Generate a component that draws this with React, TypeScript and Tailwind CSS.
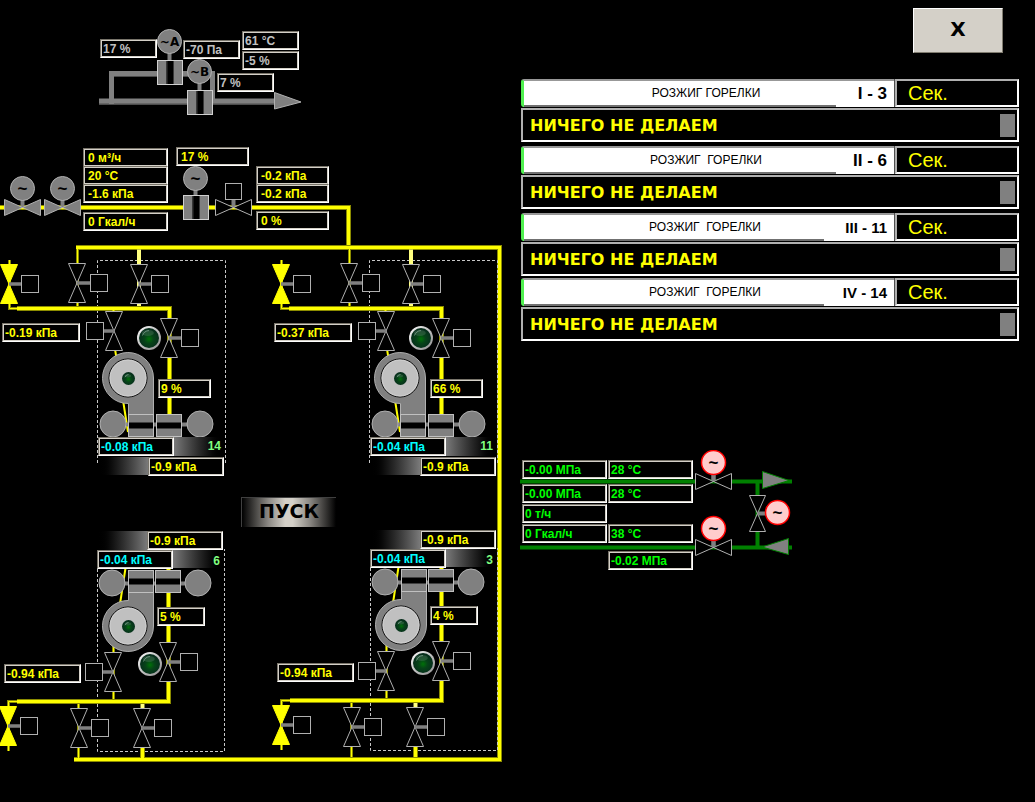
import type { ReactNode } from "react";

const METAL = "#808080";
const EDGE = "#b0b0b0";
const GAS = "#ffff00";
const GAS_DARK = "#8c8c00";
const GAS_PALE = "#ffff80";
const WATER = "#008000";

/* ---------- HTML parts ---------- */

function Reading({ className, children }: { className: string; children: ReactNode }) {
  return (
    <div
      className={`flex h-[19px] items-center whitespace-nowrap border border-b-white border-l-[#78746a] border-r-white border-t-[#78746a] bg-black text-xs font-bold leading-none shadow-[inset_0_0_0_1px_#d4d0c8] ${className}`}
    >
      {children}
    </div>
  );
}

/* ---------- drawing symbols ---------- */

type Point = { x: number; y: number };

function Pipe({ d, wide = true, color = GAS, edge = GAS_DARK }: { d: string; wide?: boolean; color?: string; edge?: string }) {
  return (
    <g fill="none" strokeLinejoin="miter">
      <path d={d} stroke={edge} strokeWidth={wide ? 5 : 3} />
      <path d={d} stroke={color} strokeWidth={wide ? 3 : 1} />
    </g>
  );
}

function VerticalValve({ x, y, open = false, box = 12.5, left = false }: Point & { open?: boolean; box?: number; left?: boolean }) {
  const boxX = left ? x - 27.5 : x + box;
  return (
    <g>
      <path
        d={`M${x - 8.5} ${y - 19.5}H${x + 8.5}L${x - 8.5} ${y + 19.5}H${x + 8.5}Z`}
        fill={open ? GAS : "#000"}
        stroke={open ? GAS : EDGE}
      />
      <path d={`M${x} ${y}H${left ? x - 11 : x + box}`} stroke={METAL} strokeWidth="3.5" />
      <rect x={boxX} y={y - 8.5} width="17" height="17" fill="#000" stroke={EDGE} />
    </g>
  );
}

function HorizontalValve({ x, y, fill = "#000" }: Point & { fill?: string }) {
  return (
    <g>
      <path d={`M${x} ${y}V${y - 9}`} stroke={METAL} strokeWidth="4" />
      <path d={`M${x - 18} ${y - 8}V${y + 8}L${x + 18} ${y - 8}V${y + 8}Z`} fill={fill} stroke={EDGE} />
    </g>
  );
}

function Drive({ x, y, label = "~", alarm = false }: Point & { label?: string; alarm?: boolean }) {
  const short = label === "~";
  return (
    <g>
      <circle cx={x} cy={y} r="12" fill={alarm ? "#ffcccc" : METAL} stroke={alarm ? "#ff0000" : EDGE} strokeWidth={alarm ? 1.5 : 1} />
      <text
        x={x}
        y={short ? y + 5 : y + 4.5}
        textAnchor="middle"
        fontSize={short ? 17 : 12}
        fontFamily={short ? "Liberation Sans, sans-serif" : "DejaVu Sans, sans-serif"}
        fontWeight="700"
        fill="#000"
      >
        {label}
      </text>
    </g>
  );
}

function Damper({ x, y, vertical = false }: Point & { vertical?: boolean }) {
  return vertical ? (
    <g>
      <rect x={x} y={y} width="25" height="24" fill={METAL} stroke="#d0d0d0" />
      <rect x={x + 8.5} y={y + 0.5} width="8" height="23" fill="#383838" />
      <rect x={x + 10} y={y + 0.5} width="5.5" height="23" fill="#000" />
    </g>
  ) : (
    <g>
      <rect x={x} y={y} width="25" height="22" fill={METAL} stroke="#c0c0c0" />
      <rect x={x + 0.5} y={y + 7.5} width="24" height="7" fill="#404040" />
      <rect x={x + 0.5} y={y + 8.5} width="24" height="5" fill="#000" />
    </g>
  );
}

function Lamp({ x, y, r }: Point & { r: number }) {
  const big = r > 8;
  return (
    <g>
      {big && <circle cx={x} cy={y} r={r} fill="url(#lamp-rim)" />}
      <circle cx={x} cy={y} r={big ? r - 2 : r} fill="url(#lamp-glass)" />
      <ellipse cx={x - r * 0.1} cy={y - r * 0.42} rx={r * 0.5} ry={r * 0.25} fill="#b8d8c4" opacity="0.16" />
      <path
        d={`M${x - r * 0.55} ${y - r * 0.2}Q${x - r * 0.4} ${y - r * 0.6} ${x} ${y - r * 0.62}`}
        fill="none"
        stroke="#9cbcaa"
        strokeWidth="0.8"
        opacity="0.7"
      />
    </g>
  );
}

function Fan({ x, y, up = false }: Point & { up?: boolean }) {
  const k = up ? -1 : 1;
  const sweep = up ? 0 : 1;
  return (
    <g>
      <path
        d={`M${x + 0.5} ${y + 36.5 * k}V${y + 25.5 * k}A25.5 25.5 0 1 ${sweep} ${x + 25.5} ${y}V${y + 36.5 * k}Z`}
        fill={METAL}
        stroke={EDGE}
      />
      <circle cx={x} cy={y} r="19" fill="#c0c0c0" stroke="#000" />
      <circle cx={x} cy={y} r="18" fill="none" stroke="#d0d0d0" />
      <Lamp x={x + 0.5} y={y + 0.5} r={6.5} />
    </g>
  );
}

function LampGradients() {
  return (
    <defs>
      <radialGradient id="lamp-glass" cx="0.5" cy="0.55" r="0.55">
        <stop offset="0" stopColor="#007208" />
        <stop offset="0.4" stopColor="#064418" />
        <stop offset="1" stopColor="#062a1c" />
      </radialGradient>
      <linearGradient id="lamp-rim" x1="0" y1="0" x2="1" y2="1">
        <stop offset="0" stopColor="#ffffff" />
        <stop offset="0.5" stopColor="#c0c0c0" />
        <stop offset="1" stopColor="#909090" />
      </linearGradient>
    </defs>
  );
}

/* ---------- burners ---------- */

type BurnerProps = {
  className: string;
  number: string;
  gas: string;
  damper: string;
  air: string;
  furnace: string;
};

function UpperBurner({ className, number, gas, damper, air, furnace }: BurnerProps) {
  return (
    <section className={`absolute h-[240px] w-[228px] ${className}`}>
      <svg className="absolute inset-0 overflow-visible" width="228" height="240" viewBox="0 240 228 240">
        <path d="M97.5 463V260.5H225.5V463" fill="none" stroke="#c8c8c8" strokeDasharray="3 2" />
        <Pipe wide={false} d="M9.5 260V308.5H20" />
        <Pipe wide={false} d="M77.5 249V307" />
        <path d="M139 249.5V307" stroke={GAS_PALE} strokeWidth="4" />
        <Pipe d="M17 308.5H169.5V424" />
        <path d="M113.5 307V312M115 349L128 432" stroke={GAS} strokeWidth="2" />
        <VerticalValve x={9} y={284} open />
        <VerticalValve x={77} y={283} box={13.5} />
        <VerticalValve x={139} y={284} />
        <VerticalValve x={114} y={331} left />
        <VerticalValve x={169} y={338} />
        <Lamp x={149} y={338} r={12} />
        <path d="M120 424.5H195" stroke={METAL} strokeWidth="4" />
        <Fan x={128} y={378} />
        <Damper x={128.5} y={414.5} />
        <Damper x={156.5} y={414.5} />
        <circle cx="113" cy="424" r="13" fill={METAL} stroke={EDGE} />
        <circle cx="200" cy="424" r="13" fill={METAL} stroke={EDGE} />
      </svg>
      <Reading className="absolute left-[2px] top-[83px] w-[78px] pl-0.5 text-[#ffff00]">{gas}</Reading>
      <Reading className="absolute left-[158px] top-[139px] w-[53px] pl-0.5 text-[#ffff00]">{damper}</Reading>
      <div className="absolute left-[98px] top-[197px] w-[126px]">
        <div className="flex h-5 items-start">
          <Reading className="w-[76px] pl-0.5 text-[#00ffff]">{air}</Reading>
          <div className="h-[19px] flex-1 bg-linear-to-r from-[#7a7a7a] to-black pr-[3px] text-right text-xs font-bold leading-[18px] text-[#80ff80]">
            {number}
          </div>
        </div>
        <div className="flex">
          <div className="h-[18px] flex-1 bg-linear-to-r from-black to-[#7a7a7a]" />
          <Reading className="w-[76px] pl-0.5 text-[#ffff00]">{furnace}</Reading>
        </div>
      </div>
    </section>
  );
}

function LowerBurner({ className, number, gas, damper, air, furnace }: BurnerProps) {
  return (
    <section className={`absolute h-[232px] w-[228px] ${className}`}>
      <svg className="absolute inset-0 overflow-visible" width="228" height="232" viewBox="0 528 228 232">
        <path d="M97.5 549V751.5H224.5V549" fill="none" stroke="#c8c8c8" strokeDasharray="3 2" />
        <Pipe wide={false} d="M8.5 751V701.5H20" />
        <Pipe wide={false} d="M78.5 703V758" />
        <Pipe wide={false} d="M113.5 640V701" />
        <path d="M142.5 703V712" stroke={GAS_PALE} strokeWidth="4" />
        <Pipe d="M142.5 740V758" />
        <Pipe d="M17 701.5H168.5V568" />
        <path d="M125.5 568L120 604" stroke={GAS} strokeWidth="2" />
        <VerticalValve x={8} y={726} open />
        <VerticalValve x={79} y={728} />
        <VerticalValve x={142} y={728} />
        <VerticalValve x={113} y={672} left />
        <VerticalValve x={168} y={662} />
        <Lamp x={150} y={664} r={12} />
        <path d="M120 583.5H190" stroke={METAL} strokeWidth="4" />
        <Fan x={128} y={626} up />
        <Damper x={128.5} y={570.5} />
        <Damper x={155.5} y={570.5} />
        <circle cx="112" cy="583" r="13" fill={METAL} stroke={EDGE} />
        <circle cx="198" cy="583" r="13" fill={METAL} stroke={EDGE} />
      </svg>
      <div className="absolute left-[97px] top-[3px] w-[126px]">
        <div className="flex">
          <div className="h-[19px] flex-1 bg-linear-to-r from-black to-[#7a7a7a]" />
          <Reading className="w-[76px] pl-0.5 text-[#ffff00]">{furnace}</Reading>
        </div>
        <div className="flex">
          <Reading className="w-[76px] pl-0.5 text-[#00ffff]">{air}</Reading>
          <div className="h-[18px] flex-1 bg-linear-to-r from-[#7a7a7a] to-black pr-[3px] text-right text-xs font-bold leading-[22px] text-[#80ff80]">
            {number}
          </div>
        </div>
      </div>
      <Reading className="absolute left-[157px] top-[79px] w-[48px] pl-0.5 text-[#ffff00]">{damper}</Reading>
      <Reading className="absolute left-[4px] top-[136px] w-[77px] pl-0.5 text-[#ffff00]">{gas}</Reading>
    </section>
  );
}

/* ---------- diagrams ---------- */

function BoilerDiagram() {
  return (
    <div className="relative h-[770px] w-[510px] shrink-0">
      <svg className="absolute inset-0" width="510" height="770" viewBox="0 0 510 770">
        <LampGradients />
        <path d="M111.5 104V74.5H212.5V101M99 102.5H276" fill="none" stroke="#4c4c4c" strokeWidth="5" />
        <path d="M111.5 104V73.5H212.5V101M99 101H276" fill="none" stroke={METAL} strokeWidth="5" />
        <path d="M169.5 52V60M199.5 83V91" stroke={METAL} strokeWidth="4" />
        <Damper vertical x={157.5} y={60.5} />
        <Damper vertical x={187.5} y={90.5} />
        <Drive x={169.5} y={41.5} label="~A" />
        <Drive x={199.5} y={71.5} label="~B" />
        <path d="M274.5 92.5L301 102L274.5 109Z" fill={METAL} stroke={EDGE} />

        <Pipe d="M0 207.5H348.5V247" />
        <Pipe d="M76 247.5H499.5V759.5H74" />
        <HorizontalValve x={22.5} y={207.5} fill={METAL} />
        <HorizontalValve x={62.5} y={207.5} fill={METAL} />
        <HorizontalValve x={233.5} y={207.5} />
        <rect x="225.5" y="183.5" width="16" height="16" fill="#000" stroke={EDGE} />
        <path d="M195.5 190V196" stroke={METAL} strokeWidth="4" />
        <Damper vertical x={183.5} y={195.5} />
        <Drive x={22.5} y={188.5} />
        <Drive x={62.5} y={188.5} />
        <Drive x={195.5} y={178.5} />
      </svg>

      <Reading className="absolute left-[100px] top-[39px] w-[57px] pl-0.5 text-[#c0c0c0]">17 %</Reading>
      <Reading className="absolute left-[183px] top-[40px] w-[57px] pl-0.5 text-[#c0c0c0]">-70 Па</Reading>
      <div className="absolute left-[242px] top-[31px] flex w-[57px] flex-col gap-px">
        <Reading className="pl-0.5 text-[#c0c0c0]">61 °C</Reading>
        <Reading className="pl-0.5 text-[#c0c0c0]">-5 %</Reading>
      </div>
      <Reading className="absolute left-[217px] top-[73px] w-[57px] pl-0.5 text-[#c0c0c0]">7 %</Reading>

      <div className="absolute left-[83px] top-[148px] w-[85px]">
        <Reading className="pl-1 text-[#ffff00]">0 м³/ч</Reading>
        <Reading className="-mt-px pl-1 text-[#ffff00]">20 °C</Reading>
        <Reading className="-mt-px pl-1 text-[#ffff00]">-1.6 кПа</Reading>
        <Reading className="mt-[9px] pl-1 text-[#ffff00]">0 Гкал/ч</Reading>
      </div>
      <Reading className="absolute left-[176px] top-[147px] w-[73px] pl-1 text-[#ffff00]">17 %</Reading>
      <div className="absolute left-[256px] top-[166px] w-[73px]">
        <Reading className="pl-1 text-[#ffff00]">-0.2 кПа</Reading>
        <Reading className="-mt-px pl-1 text-[#ffff00]">-0.2 кПа</Reading>
        <Reading className="mt-2 pl-1 text-[#ffff00]">0 %</Reading>
      </div>

      <UpperBurner className="left-0 top-[240px]" number="14" gas="-0.19 кПа" damper="9 %" air="-0.08 кПа" furnace="-0.9 кПа" />
      <UpperBurner className="left-[272px] top-[240px]" number="11" gas="-0.37 кПа" damper="66 %" air="-0.04 кПа" furnace="-0.9 кПа" />
      <LowerBurner className="left-0 top-[528px]" number="6" gas="-0.94 кПа" damper="5 %" air="-0.04 кПа" furnace="-0.9 кПа" />
      <LowerBurner className="left-[273px] top-[527px]" number="3" gas="-0.94 кПа" damper="4 %" air="-0.04 кПа" furnace="-0.9 кПа" />

      <button
        type="button"
        className="absolute left-[241px] top-[497px] h-[30px] w-[95px] border-l border-t border-[#404040] bg-[linear-gradient(90deg,#000,#8c8984_28%,#d4d0c8_46%,#d4d0c8_54%,#8c8984_72%,#000)] pb-0.5 font-['DejaVu_Sans',sans-serif] text-[19px] font-bold leading-none text-black"
      >
        ПУСК
      </button>
    </div>
  );
}

function WaterDiagram() {
  return (
    <div className="relative h-[130px] w-[290px]">
      <svg className="absolute inset-0" width="290" height="130" viewBox="510 450 290 130">
        <path d="M520 481.5H792M520 547.5H792M757.5 481V547" stroke={WATER} strokeWidth="4" />
        <path d="M762.5 471.5V488.5L789 480.5Z" fill={METAL} stroke={WATER} />
        <path d="M788.5 538.5V554.5L762 547Z" fill={METAL} stroke={WATER} />
        <HorizontalValve x={713.5} y={481.5} />
        <HorizontalValve x={713.5} y={547.5} />
        <path d="M749.5 495.5H765.5L749.5 531.5H765.5Z" fill="#000" stroke={EDGE} />
        <path d="M713.5 481V472M713.5 547V538M757.5 513.5H768" stroke={METAL} strokeWidth="4" />
        <Drive x={713.5} y={462.5} alarm />
        <Drive x={713.5} y={528.5} alarm />
        <Drive x={777.5} y={512.5} alarm />
      </svg>
      <div className="relative flex gap-px pl-3 pt-2.5">
        <div className="w-[85px]">
          <Reading className="pl-0.5 text-[#00ff00]">-0.00 МПа</Reading>
          <Reading className="mt-[5px] pl-0.5 text-[#00ff00]">-0.00 МПа</Reading>
          <Reading className="mt-px pl-0.5 text-[#00ff00]">0 т/ч</Reading>
          <Reading className="mt-px pl-0.5 text-[#00ff00]">0 Гкал/ч</Reading>
        </div>
        <div className="w-[85px]">
          <Reading className="pl-0.5 text-[#00ff00]">28 °C</Reading>
          <Reading className="mt-[5px] pl-0.5 text-[#00ff00]">28 °C</Reading>
          <Reading className="mt-[21px] pl-0.5 text-[#00ff00]">38 °C</Reading>
          <Reading className="mt-2 pl-0.5 text-[#00ff00]">-0.02 МПа</Reading>
        </div>
      </div>
    </div>
  );
}

/* ---------- ignition status ---------- */

type Ignition = { title: string; id: string; idClass: string; titleClass: string; className: string };

const ignitions: Ignition[] = [
  { title: "РОЗЖИГ ГОРЕЛКИ", id: "I - 3", idClass: "w-[58px] text-[17px]", titleClass: "pl-[52px]", className: "" },
  { title: "РОЗЖИГ\u00a0 ГОРЕЛКИ", id: "II - 6", idClass: "w-[58px] text-[17px]", titleClass: "pl-[52px]", className: "mt-1" },
  { title: "РОЗЖИГ\u00a0 ГОРЕЛКИ", id: "III - 11", idClass: "w-[70px] text-[15px]", titleClass: "pl-[62px]", className: "mt-1" },
  { title: "РОЗЖИГ\u00a0 ГОРЕЛКИ", id: "IV - 14", idClass: "w-[70px] text-[15px]", titleClass: "pl-[62px]", className: "mt-0.5" },
];

function IgnitionPanel({ title, id, idClass, titleClass, className }: Ignition) {
  return (
    <section className={className}>
      <div className="flex h-[29px]">
        <div className="flex h-[28px] flex-1 rounded-l-[3px] border-l-[3px] border-t-2 border-l-[#50f050] border-t-[#989898] bg-white">
          <h2 className={`flex flex-1 items-center justify-center border-b-2 border-[#707070] text-xs text-black ${titleClass}`}>{title}</h2>
          <strong className={`flex items-center justify-end whitespace-nowrap pb-0.5 pr-[7px] font-bold leading-none text-black ${idClass}`}>{id}</strong>
        </div>
        <div className="h-[28px] w-[125px] border-l border-[#505050]">
          <div className="flex h-full items-center border-2 border-b-white border-l-[#b0b0b0] border-r-white border-t-[#b0b0b0] pl-[11px] text-xl leading-none text-[#ffff00]">
            Сек.
          </div>
        </div>
      </div>
      <div className="flex h-[34px] items-center justify-between border-2 border-b-white border-l-[#b0b0b0] border-r-white border-t-[#b0b0b0] pl-[7px] pr-0.5">
        <p className="pt-px font-['DejaVu_Sans',sans-serif] text-base font-bold leading-none text-[#ffff00]">НИЧЕГО НЕ ДЕЛАЕМ</p>
        <span className="h-[23px] w-[15px] bg-[#808080]" />
      </div>
    </section>
  );
}

export default function App() {
  return (
    <main className="flex min-h-screen bg-black font-['Liberation_Sans',Arial,sans-serif]">
      <BoilerDiagram />
      <div className="flex flex-1 flex-col pr-4 pt-2">
        <button
          type="button"
          className="mr-4 h-[45px] w-[90px] self-end border border-b-[#807c70] border-l-white border-r-[#807c70] border-t-white bg-[#d4d0c8] pb-1 font-['DejaVu_Sans',sans-serif] text-xl font-bold leading-none text-black"
        >
          X
        </button>
        <div className="mt-[26px] pl-[11px]">
          {ignitions.map((item) => (
            <IgnitionPanel key={item.id} {...item} />
          ))}
        </div>
        <div className="mt-[109px]">
          <WaterDiagram />
        </div>
      </div>
    </main>
  );
}
